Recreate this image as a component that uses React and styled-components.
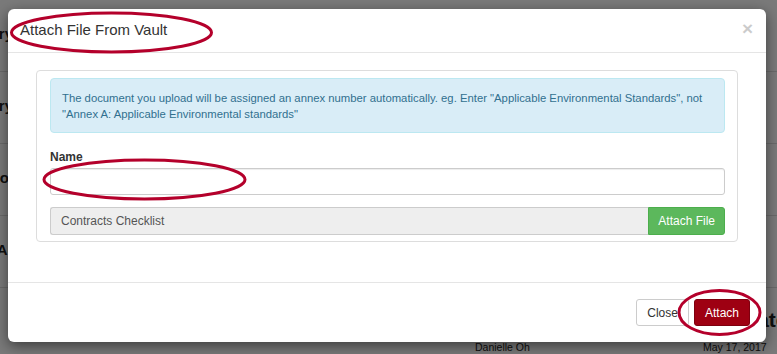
import React from 'react'
import styled, { createGlobalStyle } from 'styled-components'

const Global = createGlobalStyle`
    html, body {
        margin: 0;
        padding: 0;
        background: #fff;
    }
    body {
        font-family: "Liberation Sans", Arial, Helvetica, sans-serif;
        color: #333;
    }
`

export default function App() {
    const rows = [
        { label: 'Country', end: 13 },
        { label: 'Delivery', end: 13 },
        { label: 'Portfolio', end: 9 },
        { label: 'Agency', end: 51 },
    ]
    return (
        <Screen>
            <Global />
            <Page>
                {rows.map(row => (
                    <Row key={row.label}>
                        <RowLabel $end={row.end}>{row.label}</RowLabel>
                    </Row>
                ))}
                <Heading>Date</Heading>
                <MetaRow>
                    <span>Danielle Oh</span>
                    <span>May 17, 2017</span>
                </MetaRow>
            </Page>

            <Backdrop>
                <Modal>
                    <ModalHeader>
                        <Title>Attach File From Vault</Title>
                        <CloseX>×</CloseX>
                    </ModalHeader>
                    <ModalBody>
                        <Panel>
                            <Alert>
                                The document you upload will be assigned an annex number automatically. eg. Enter "Applicable Environmental Standards", not "Annex A: Applicable Environmental standards"
                            </Alert>
                            <Field>
                                <Label>Name</Label>
                                <Input />
                            </Field>
                            <FileGroup>
                                <FileName>Contracts Checklist</FileName>
                                <GreenButton>Attach File</GreenButton>
                            </FileGroup>
                        </Panel>
                    </ModalBody>
                    <ModalFooter>
                        <Button>Close</Button>
                        <Button $primary>Attach</Button>
                    </ModalFooter>
                </Modal>
            </Backdrop>

            <Marks width="777" height="354" viewBox="0 0 777 354">
                <ellipse cx="111.5" cy="32.5" rx="100" ry="19.5" />
                <ellipse cx="144.5" cy="179.5" rx="100.5" ry="19.5" />
                <ellipse cx="719.5" cy="312.5" rx="40.5" ry="22" />
            </Marks>
        </Screen>
    )
}

const Screen = styled.div`
    position: relative;
    width: 777px;
    height: 354px;
    overflow: hidden;
`

const Page = styled.div`
    display: flex;
    flex-direction: column;
`

const Row = styled.div`
    height: 72px;
    border-bottom: 1px solid #ddd;
    display: flex;
    align-items: center;
    padding-bottom: 4px;
    box-sizing: border-box;
`

const RowLabel = styled.div`
    width: ${props => props.$end}px;
    display: flex;
    justify-content: flex-end;
    white-space: nowrap;
    font-size: 15px;
    font-weight: bold;
    color: #222;
`

const Heading = styled.div`
    padding: 20px 0 0 742px;
    font-size: 21px;
    font-weight: bold;
    line-height: 24px;
    white-space: nowrap;
    color: #222;
`

const MetaRow = styled.div`
    display: grid;
    grid-template-columns: 228px auto;
    margin-top: 7px;
    padding-left: 475px;
    font-size: 10.5px;
    line-height: 16px;
    white-space: nowrap;
    color: #222;
`

const Backdrop = styled.div`
    position: absolute;
    inset: 0;
    background: rgba(0, 0, 0, 0.52);
    padding: 9px 11px 0 8px;
`

const Modal = styled.div`
    background: #fff;
    border-radius: 6px;
    box-shadow: 0 4px 14px rgba(0, 0, 0, 0.5);
    height: 333px;
    display: flex;
    flex-direction: column;
`

const ModalHeader = styled.div`
    height: 44px;
    box-sizing: border-box;
    border-bottom: 1px solid #e5e5e5;
    display: flex;
    align-items: center;
    justify-content: space-between;
    padding: 0 13px 2px 12px;
`

const Title = styled.h4`
    margin: 0;
    font-size: 15px;
    font-weight: 500;
    color: #333;
`

const CloseX = styled.span`
    font-size: 19px;
    font-weight: bold;
    line-height: 1;
    color: #000;
    opacity: 0.2;
    margin-top: -2px;
`

const ModalBody = styled.div`
    padding: 17px 28px 0 28px;
    height: 230px;
    box-sizing: border-box;
    border-bottom: 1px solid #e5e5e5;
`

const Panel = styled.div`
    border: 1px solid #ddd;
    border-radius: 4px;
    padding: 7px 12px 6px 13px;
    display: flex;
    flex-direction: column;
`

const Alert = styled.div`
    background: #d9edf7;
    border: 1px solid #bce8f1;
    border-radius: 4px;
    color: #31708f;
    font-size: 11.3px;
    line-height: 16px;
    padding: 11px 11px 10px 11px;
`

const Field = styled.div`
    display: flex;
    flex-direction: column;
    gap: 4px;
    margin-top: 17px;
`

const Label = styled.label`
    font-size: 12px;
    font-weight: bold;
    line-height: 14px;
    color: #333;
`

const Input = styled.div`
    height: 27px;
    box-sizing: border-box;
    border: 1px solid #ccc;
    border-radius: 3px;
    box-shadow: inset 0 1px 1px rgba(0, 0, 0, 0.075);
`

const FileGroup = styled.div`
    display: flex;
    height: 28px;
    margin-top: 12px;
`

const FileName = styled.div`
    flex: 1;
    background: #eee;
    border: 1px solid #ccc;
    border-right: none;
    border-radius: 3px 0 0 3px;
    display: flex;
    align-items: center;
    padding-left: 10px;
    font-size: 12px;
    color: #555;
`

const GreenButton = styled.div`
    background: #5cb85c;
    border: 1px solid #4cae4c;
    border-radius: 0 3px 3px 0;
    color: #fff;
    font-size: 12px;
    display: flex;
    align-items: center;
    padding: 0 9px;
`

const ModalFooter = styled.div`
    flex: 1;
    display: flex;
    justify-content: flex-end;
    align-items: center;
    gap: 5px;
    padding: 0 16px 0 0;
`

const Button = styled.div`
    height: 27px;
    box-sizing: border-box;
    display: flex;
    align-items: center;
    padding: 0 10px;
    font-size: 12px;
    border-radius: 3px;
    border: 1px solid ${props => (props.$primary ? '#7e000f' : '#ccc')};
    background: ${props => (props.$primary ? '#9e0012' : '#fff')};
    color: ${props => (props.$primary ? '#fff' : '#333')};
`

const Marks = styled.svg`
    position: absolute;
    left: 0;
    top: 0;
    pointer-events: none;
    ellipse {
        fill: none;
        stroke: #b4002b;
        stroke-width: 3;
    }
`
